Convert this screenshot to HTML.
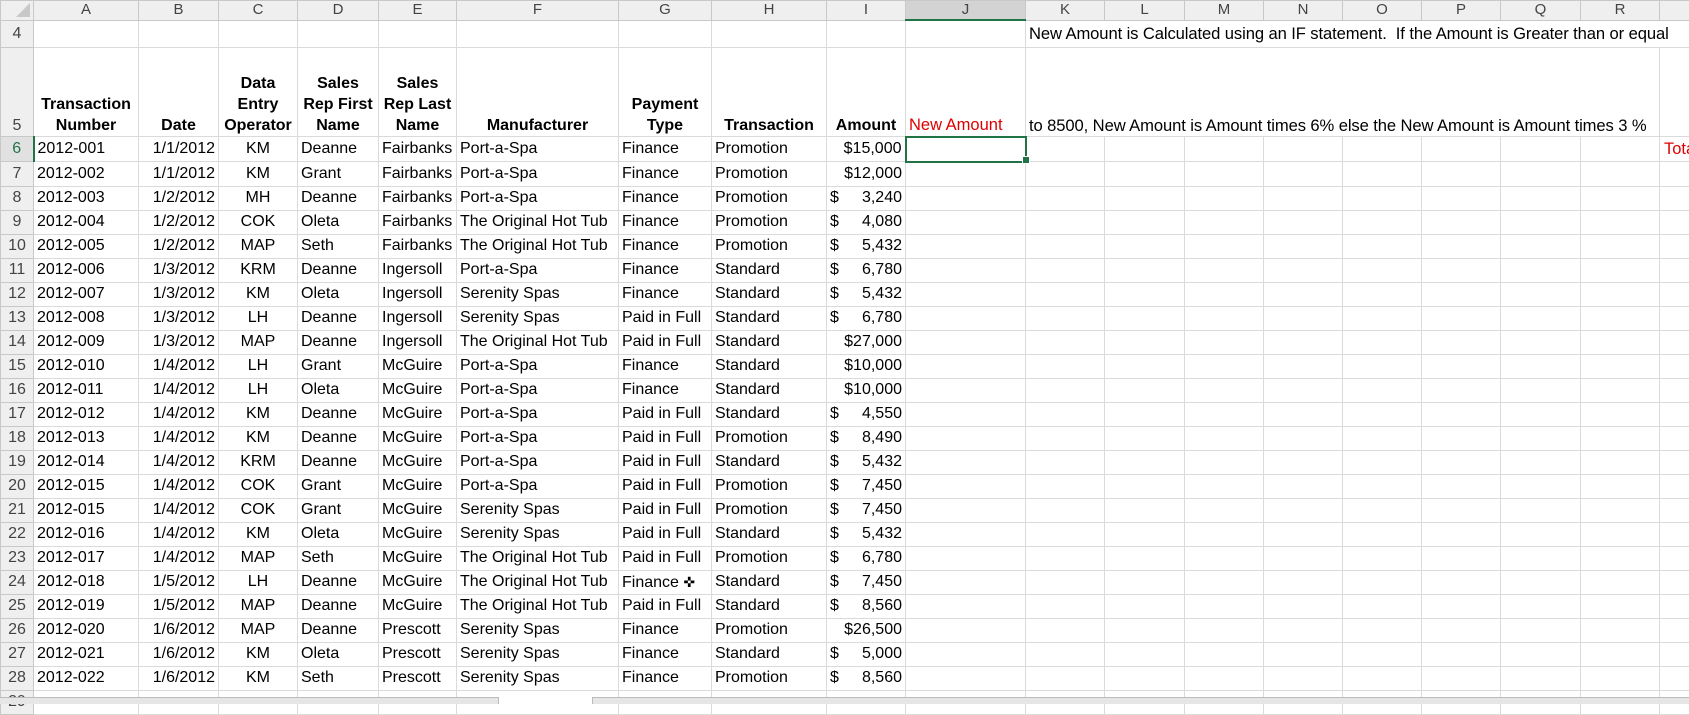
<!DOCTYPE html>
<html><head><meta charset="utf-8"><style>
body{margin:0;width:1689px;height:703px;overflow:hidden;background:#fff;font-family:"Liberation Sans",Arial,sans-serif;position:relative}
table{border-collapse:collapse;table-layout:fixed;position:absolute;left:0;top:0;width:1689px}
td{border:1px solid #dadada;padding:0 3px;height:23px;font-size:16px;white-space:nowrap;overflow:hidden;color:#000;line-height:22px}
tr.h td{background:#efefef;color:#444;text-align:center;font-size:15px;height:18px;line-height:18px;border-color:#c8c8c8}
td.r{background:#efefef;color:#444;text-align:center;font-size:16px;border-color:#c8c8c8;padding:0}
.c{text-align:center}.rt{text-align:right}
tr.hd td{font-weight:bold;vertical-align:bottom;text-align:center;line-height:21px;height:88px}
.d{float:left}
.note{font-size:16.6px;letter-spacing:-0.1px}
.red{color:#e00000;font-size:16.5px}
</style></head><body>
<table>
<colgroup><col style="width:33px"><col style="width:105px"><col style="width:80px"><col style="width:79px"><col style="width:81px"><col style="width:78px"><col style="width:162px"><col style="width:93px"><col style="width:115px"><col style="width:79px"><col style="width:120px"><col style="width:79px"><col style="width:80px"><col style="width:79px"><col style="width:79px"><col style="width:79px"><col style="width:79px"><col style="width:80px"><col style="width:79px"><col style="width:30px"></colgroup>
<tr class="h"><td></td><td>A</td><td>B</td><td>C</td><td>D</td><td>E</td><td>F</td><td>G</td><td>H</td><td>I</td><td style="background:#d3d3d3;border-bottom:2px solid #217346">J</td><td>K</td><td>L</td><td>M</td><td>N</td><td>O</td><td>P</td><td>Q</td><td>R</td><td></td></tr>
<tr style="height:27px"><td class="r">4</td><td></td><td></td><td></td><td></td><td></td><td></td><td></td><td></td><td></td><td></td><td colspan="9" style="border:1px solid #dadada;overflow:visible" class="note">New Amount is Calculated using an IF statement.&nbsp; If the Amount is Greater than or equal</td></tr>
<tr class="hd"><td class="r" style="font-weight:normal;vertical-align:bottom">5</td><td>Transaction<br>Number</td><td class="rt">Date</td><td>Data<br>Entry<br>Operator</td><td>Sales<br>Rep First<br>Name</td><td>Sales<br>Rep Last<br>Name</td><td>Manufacturer</td><td>Payment<br>Type</td><td>Transaction</td><td class="rt">Amount</td><td style="text-align:left;font-weight:normal" class="red">New Amount</td><td colspan="8" style="text-align:left;font-weight:normal;overflow:visible" class="note">to 8500, New Amount is Amount times 6% else the New Amount is Amount times 3 %</td><td></td></tr>
<tr><td class="r" style="color:#217346;background:#e1e1e1;border-right:2px solid #217346">6</td><td>2012-001</td><td class="rt">1/1/2012</td><td class="c">KM</td><td>Deanne</td><td>Fairbanks</td><td>Port-a-Spa</td><td>Finance</td><td>Promotion</td><td class="rt">$15,000</td><td style="border:2px solid #217346"></td><td></td><td></td><td></td><td></td><td></td><td></td><td></td><td></td><td class="red" style="padding:0 0 0 4px">Total</td></tr>
<tr><td class="r">7</td><td>2012-002</td><td class="rt">1/1/2012</td><td class="c">KM</td><td>Grant</td><td>Fairbanks</td><td>Port-a-Spa</td><td>Finance</td><td>Promotion</td><td class="rt">$12,000</td><td></td><td></td><td></td><td></td><td></td><td></td><td></td><td></td><td></td><td></td></tr>
<tr><td class="r">8</td><td>2012-003</td><td class="rt">1/2/2012</td><td class="c">MH</td><td>Deanne</td><td>Fairbanks</td><td>Port-a-Spa</td><td>Finance</td><td>Promotion</td><td class="rt"><span class="d">$</span>3,240</td><td></td><td></td><td></td><td></td><td></td><td></td><td></td><td></td><td></td><td></td></tr>
<tr><td class="r">9</td><td>2012-004</td><td class="rt">1/2/2012</td><td class="c">COK</td><td>Oleta</td><td>Fairbanks</td><td>The Original Hot Tub</td><td>Finance</td><td>Promotion</td><td class="rt"><span class="d">$</span>4,080</td><td></td><td></td><td></td><td></td><td></td><td></td><td></td><td></td><td></td><td></td></tr>
<tr><td class="r">10</td><td>2012-005</td><td class="rt">1/2/2012</td><td class="c">MAP</td><td>Seth</td><td>Fairbanks</td><td>The Original Hot Tub</td><td>Finance</td><td>Promotion</td><td class="rt"><span class="d">$</span>5,432</td><td></td><td></td><td></td><td></td><td></td><td></td><td></td><td></td><td></td><td></td></tr>
<tr><td class="r">11</td><td>2012-006</td><td class="rt">1/3/2012</td><td class="c">KRM</td><td>Deanne</td><td>Ingersoll</td><td>Port-a-Spa</td><td>Finance</td><td>Standard</td><td class="rt"><span class="d">$</span>6,780</td><td></td><td></td><td></td><td></td><td></td><td></td><td></td><td></td><td></td><td></td></tr>
<tr><td class="r">12</td><td>2012-007</td><td class="rt">1/3/2012</td><td class="c">KM</td><td>Oleta</td><td>Ingersoll</td><td>Serenity Spas</td><td>Finance</td><td>Standard</td><td class="rt"><span class="d">$</span>5,432</td><td></td><td></td><td></td><td></td><td></td><td></td><td></td><td></td><td></td><td></td></tr>
<tr><td class="r">13</td><td>2012-008</td><td class="rt">1/3/2012</td><td class="c">LH</td><td>Deanne</td><td>Ingersoll</td><td>Serenity Spas</td><td>Paid in Full</td><td>Standard</td><td class="rt"><span class="d">$</span>6,780</td><td></td><td></td><td></td><td></td><td></td><td></td><td></td><td></td><td></td><td></td></tr>
<tr><td class="r">14</td><td>2012-009</td><td class="rt">1/3/2012</td><td class="c">MAP</td><td>Deanne</td><td>Ingersoll</td><td>The Original Hot Tub</td><td>Paid in Full</td><td>Standard</td><td class="rt">$27,000</td><td></td><td></td><td></td><td></td><td></td><td></td><td></td><td></td><td></td><td></td></tr>
<tr><td class="r">15</td><td>2012-010</td><td class="rt">1/4/2012</td><td class="c">LH</td><td>Grant</td><td>McGuire</td><td>Port-a-Spa</td><td>Finance</td><td>Standard</td><td class="rt">$10,000</td><td></td><td></td><td></td><td></td><td></td><td></td><td></td><td></td><td></td><td></td></tr>
<tr><td class="r">16</td><td>2012-011</td><td class="rt">1/4/2012</td><td class="c">LH</td><td>Oleta</td><td>McGuire</td><td>Port-a-Spa</td><td>Finance</td><td>Standard</td><td class="rt">$10,000</td><td></td><td></td><td></td><td></td><td></td><td></td><td></td><td></td><td></td><td></td></tr>
<tr><td class="r">17</td><td>2012-012</td><td class="rt">1/4/2012</td><td class="c">KM</td><td>Deanne</td><td>McGuire</td><td>Port-a-Spa</td><td>Paid in Full</td><td>Standard</td><td class="rt"><span class="d">$</span>4,550</td><td></td><td></td><td></td><td></td><td></td><td></td><td></td><td></td><td></td><td></td></tr>
<tr><td class="r">18</td><td>2012-013</td><td class="rt">1/4/2012</td><td class="c">KM</td><td>Deanne</td><td>McGuire</td><td>Port-a-Spa</td><td>Paid in Full</td><td>Promotion</td><td class="rt"><span class="d">$</span>8,490</td><td></td><td></td><td></td><td></td><td></td><td></td><td></td><td></td><td></td><td></td></tr>
<tr><td class="r">19</td><td>2012-014</td><td class="rt">1/4/2012</td><td class="c">KRM</td><td>Deanne</td><td>McGuire</td><td>Port-a-Spa</td><td>Paid in Full</td><td>Standard</td><td class="rt"><span class="d">$</span>5,432</td><td></td><td></td><td></td><td></td><td></td><td></td><td></td><td></td><td></td><td></td></tr>
<tr><td class="r">20</td><td>2012-015</td><td class="rt">1/4/2012</td><td class="c">COK</td><td>Grant</td><td>McGuire</td><td>Port-a-Spa</td><td>Paid in Full</td><td>Promotion</td><td class="rt"><span class="d">$</span>7,450</td><td></td><td></td><td></td><td></td><td></td><td></td><td></td><td></td><td></td><td></td></tr>
<tr><td class="r">21</td><td>2012-015</td><td class="rt">1/4/2012</td><td class="c">COK</td><td>Grant</td><td>McGuire</td><td>Serenity Spas</td><td>Paid in Full</td><td>Promotion</td><td class="rt"><span class="d">$</span>7,450</td><td></td><td></td><td></td><td></td><td></td><td></td><td></td><td></td><td></td><td></td></tr>
<tr><td class="r">22</td><td>2012-016</td><td class="rt">1/4/2012</td><td class="c">KM</td><td>Oleta</td><td>McGuire</td><td>Serenity Spas</td><td>Paid in Full</td><td>Standard</td><td class="rt"><span class="d">$</span>5,432</td><td></td><td></td><td></td><td></td><td></td><td></td><td></td><td></td><td></td><td></td></tr>
<tr><td class="r">23</td><td>2012-017</td><td class="rt">1/4/2012</td><td class="c">MAP</td><td>Seth</td><td>McGuire</td><td>The Original Hot Tub</td><td>Paid in Full</td><td>Promotion</td><td class="rt"><span class="d">$</span>6,780</td><td></td><td></td><td></td><td></td><td></td><td></td><td></td><td></td><td></td><td></td></tr>
<tr><td class="r">24</td><td>2012-018</td><td class="rt">1/5/2012</td><td class="c">LH</td><td>Deanne</td><td>McGuire</td><td>The Original Hot Tub</td><td>Finance <span style="font-size:14px">✜</span></td><td>Standard</td><td class="rt"><span class="d">$</span>7,450</td><td></td><td></td><td></td><td></td><td></td><td></td><td></td><td></td><td></td><td></td></tr>
<tr><td class="r">25</td><td>2012-019</td><td class="rt">1/5/2012</td><td class="c">MAP</td><td>Deanne</td><td>McGuire</td><td>The Original Hot Tub</td><td>Paid in Full</td><td>Standard</td><td class="rt"><span class="d">$</span>8,560</td><td></td><td></td><td></td><td></td><td></td><td></td><td></td><td></td><td></td><td></td></tr>
<tr><td class="r">26</td><td>2012-020</td><td class="rt">1/6/2012</td><td class="c">MAP</td><td>Deanne</td><td>Prescott</td><td>Serenity Spas</td><td>Finance</td><td>Promotion</td><td class="rt">$26,500</td><td></td><td></td><td></td><td></td><td></td><td></td><td></td><td></td><td></td><td></td></tr>
<tr><td class="r">27</td><td>2012-021</td><td class="rt">1/6/2012</td><td class="c">KM</td><td>Oleta</td><td>Prescott</td><td>Serenity Spas</td><td>Finance</td><td>Standard</td><td class="rt"><span class="d">$</span>5,000</td><td></td><td></td><td></td><td></td><td></td><td></td><td></td><td></td><td></td><td></td></tr>
<tr><td class="r">28</td><td>2012-022</td><td class="rt">1/6/2012</td><td class="c">KM</td><td>Seth</td><td>Prescott</td><td>Serenity Spas</td><td>Finance</td><td>Promotion</td><td class="rt"><span class="d">$</span>8,560</td><td></td><td></td><td></td><td></td><td></td><td></td><td></td><td></td><td></td><td></td></tr>
<tr><td class="r">29</td><td></td><td></td><td></td><td></td><td></td><td></td><td></td><td></td><td></td><td></td><td></td><td></td><td></td><td></td><td></td><td></td><td></td><td></td><td></td></tr>
</table>
<div style="position:absolute;width:0;height:0;border-left:14px solid transparent;border-bottom:14px solid #c8c8c8;left:16px;top:3px"></div>
<div style="position:absolute;left:1022px;top:156px;width:6px;height:6px;background:#217346;border:1px solid #fff"></div>
<div style="position:absolute;left:0;top:697px;width:1689px;height:6px;background:#fff"></div>
<div style="position:absolute;left:0;top:697px;width:498px;height:6px;background:#e6e6e6;border-top:1px solid #bbb;border-right:1px solid #bbb"></div>
<div style="position:absolute;left:592px;top:697px;width:1097px;height:6px;background:#e6e6e6;border-top:1px solid #bbb;border-left:1px solid #bbb"></div>
</body></html>
